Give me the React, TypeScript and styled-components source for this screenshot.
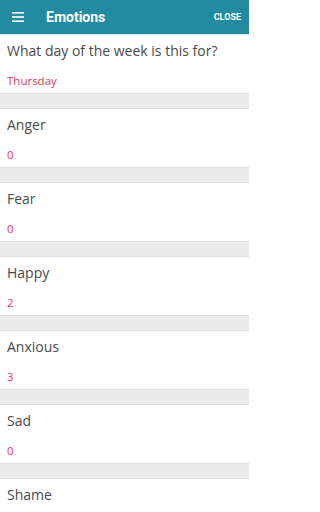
import styled, { createGlobalStyle } from "styled-components"

type Question = {
	label: string,
	value: string,
}

const questions: Question[] = [
	{ label: "What day of the week is this for?", value: "Thursday" },
	{ label: "Anger", value: "0" },
	{ label: "Fear", value: "0" },
	{ label: "Happy", value: "2" },
	{ label: "Anxious", value: "3" },
	{ label: "Sad", value: "0" },
	{ label: "Shame", value: "" },
]

const GlobalStyle = createGlobalStyle`
	html, body {
		margin: 0;
		padding: 0;
		background: #ffffff;
	}
	body {
		font-family: "Open Sans", "Liberation Sans", sans-serif;
	}
`

const s = {
	Page: styled.div`
		display: flex;
		flex-direction: column;
		width: 249px;
		height: 512px;
		overflow: hidden;
		background: #ececec;
	`,

	Toolbar: styled.header`
		display: flex;
		flex-direction: row;
		align-items: center;
		height: 34px;
		padding: 0 8px 0 12px;
		background: #238ba1;
		color: #ffffff;
		font-family: Roboto, "Liberation Sans", sans-serif;
		flex-shrink: 0;
	`,

	MenuIcon: styled.svg`
		width: 12px;
		height: 10px;
		margin-right: 22px;
	`,

	Title: styled.h1`
		flex-grow: 1;
		margin: 0;
		font-size: 14px;
		font-weight: 700;
	`,

	CloseButton: styled.button`
		border: none;
		background: none;
		padding: 0;
		color: #ffffff;
		font-family: Roboto, "Liberation Sans", sans-serif;
		font-size: 9px;
		font-weight: 700;
	`,

	List: styled.div`
		display: flex;
		flex-direction: column;
		gap: 14px;
	`,

	Card: styled.div`
		display: flex;
		flex-direction: column;
		height: 60px;
		box-sizing: border-box;
		padding: 6px 7px 0;
		background: #ffffff;
		border-top: 1px solid #dedede;
		border-bottom: 1px solid #dedede;
		flex-shrink: 0;

		&:first-child {
			border-top-color: #d3e8ed;
		}
	`,

	Label: styled.div`
		font-size: 14px;
		line-height: 20px;
		color: #4a4a4a;
		white-space: nowrap;
	`,

	Value: styled.div`
		margin-top: 12px;
		font-size: 11.5px;
		line-height: 16px;
		color: #e8375b;
	`,
}

function QuestionCard({ question }: { question: Question }) {
	return (
		<s.Card>
			<s.Label>{question.label}</s.Label>
			<s.Value>{question.value}</s.Value>
		</s.Card>
	)
}

export default function App() {
	return (
		<s.Page>
			<GlobalStyle />
			<s.Toolbar>
				<s.MenuIcon viewBox="0 0 12 10" aria-hidden={true}>
					<rect x="0" y="0" width="12" height="1.6" fill="#ffffff" />
					<rect x="0" y="4.2" width="12" height="1.6" fill="#ffffff" />
					<rect x="0" y="8.4" width="12" height="1.6" fill="#ffffff" />
				</s.MenuIcon>
				<s.Title>Emotions</s.Title>
				<s.CloseButton>CLOSE</s.CloseButton>
			</s.Toolbar>
			<s.List>
				{questions.map((question, index) =>
					<QuestionCard question={question} key={index} />)}
			</s.List>
		</s.Page>
	)
}
